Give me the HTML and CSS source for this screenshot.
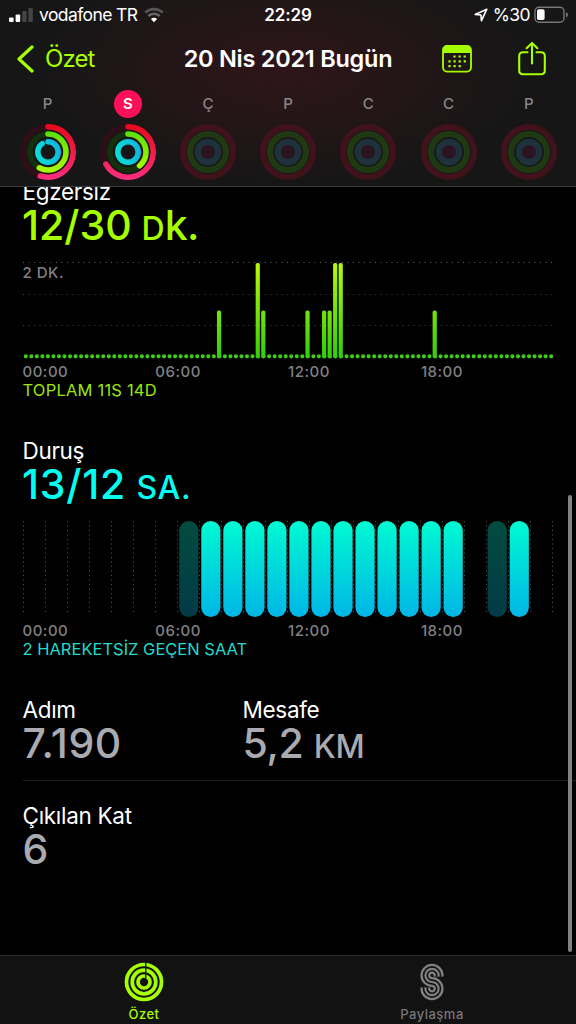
FILE: index.html
```
<!DOCTYPE html>
<html lang="tr">
<head>
    <meta charset="UTF-8">
    <meta name="viewport" content="width=device-width, initial-scale=1.0">
    <title>Özet</title>
    <link rel="stylesheet" href="styles.css">
</head>
<body>
    <header class="header">
        <div class="status-bar">
            <div class="status-left">
                <svg class="signal" width="24" height="16" viewBox="0 0 24 16">
                    <rect x="0" y="10.5" width="4.6" height="4.5" rx="1" fill="#fff"/>
                    <rect x="6.6" y="7.5" width="4.6" height="7.5" rx="1" fill="#fff"/>
                    <rect x="13.2" y="4" width="4.4" height="11" rx="1" fill="#444"/>
                    <rect x="19.4" y="1" width="4.4" height="14" rx="1" fill="#444"/>
                </svg>
                <span class="carrier">vodafone TR</span>
                <svg class="wifi" width="20" height="16" viewBox="0 0 20 16">
                    <path d="M1.3 5.6A12.4 12.4 0 0 1 18.7 5.6" fill="none" stroke="#555" stroke-width="2.7"/>
                    <path d="M4.4 9A8 8 0 0 1 15.6 9" fill="none" stroke="#666" stroke-width="2.5"/>
                    <path d="M10 15.2L6.9 12.1A4.5 4.5 0 0 1 13.1 12.1Z" fill="#fff"/>
                </svg>
            </div>
            <div class="clock">22:29</div>
            <div class="status-right">
                <svg width="14" height="14" viewBox="0 0 14 14">
                    <path d="M12.8 1.2L1.2 6.4L7 7L7.4 12.8Z" fill="none" stroke="#fff" stroke-width="1.6" stroke-linejoin="round"/>
                </svg>
                <span class="percent">%30</span>
                <svg width="35" height="18" viewBox="0 0 35 18">
                    <rect x="1" y="1.2" width="29" height="15" rx="4" fill="none" stroke="#777" stroke-width="1.4"/>
                    <rect x="3" y="3.3" width="7.6" height="10.8" rx="1.8" fill="#fff"/>
                    <path d="M32 6.2Q34 7 34 8.8Q34 10.6 32 11.4Z" fill="#777"/>
                </svg>
            </div>
        </div>

        <nav class="nav-bar">
            <a class="back">
                <svg width="18" height="28" viewBox="0 0 18 28">
                    <path d="M15 2L2 14L15 26" fill="none" stroke="#a6ff00" stroke-width="3.2" stroke-linecap="round" stroke-linejoin="round"/>
                </svg>
                <span>Özet</span>
            </a>
            <h1 class="title">20 Nis 2021 Bugün</h1>
            <div class="actions">
                <svg width="30" height="28" viewBox="0 0 30 28">
                    <rect x="1" y="1" width="28" height="25.6" rx="4" fill="none" stroke="#a6ff00" stroke-width="1.8"/>
                    <path d="M1 8V5Q1 1 5 1H25Q29 1 29 5V8Z" fill="#a6ff00"/>
                    <path d="M11.4 11.5H24.4M6.4 16.4H24.4M6.4 21.2H19" stroke="#a6ff00" stroke-width="2.2" stroke-dasharray="2.2 2.9"/>
                </svg>
                <svg width="28" height="36" viewBox="0 0 28 36">
                    <path d="M9.5 11.3H5Q1.2 11.3 1.2 15V29.5Q1.2 33.2 5 33.2H23Q26.8 33.2 26.8 29.5V15Q26.8 11.3 23 11.3H18.5" fill="none" stroke="#a6ff00" stroke-width="2.1" stroke-linecap="round"/>
                    <path d="M14 22.5V2.2M8.6 7.3L14 2L19.4 7.3" fill="none" stroke="#a6ff00" stroke-width="2.1" stroke-linecap="round" stroke-linejoin="round"/>
                </svg>
            </div>
        </nav>

        <div class="week">
            <div class="day">
                <span class="day-name">P</span>
                <svg class="rings" viewBox="-29 -29 58 58">
                    <defs>
                        <linearGradient id="move" gradientUnits="userSpaceOnUse" x1="28" y1="0" x2="-28" y2="0">
                            <stop offset="0" stop-color="#e60a18"/>
                            <stop offset="1" stop-color="#fa2f80"/>
                        </linearGradient>
                        <linearGradient id="exercise" gradientUnits="userSpaceOnUse" x1="20" y1="0" x2="-20" y2="0">
                            <stop offset="0" stop-color="#5ce008"/>
                            <stop offset="1" stop-color="#acfa04"/>
                        </linearGradient>
                        <linearGradient id="stand" gradientUnits="userSpaceOnUse" x1="4" y1="13" x2="-4" y2="-13">
                            <stop offset="0" stop-color="#10b4dc"/>
                            <stop offset="1" stop-color="#08e0d4"/>
                        </linearGradient>
                    </defs>
                    <g class="track">
                        <circle class="r-move" r="25.2"/>
                        <circle class="r-exercise" r="18"/>
                        <circle class="r-stand" r="10.2"/>
                    </g>
                    <g class="arc" transform="rotate(-90)">
                        <circle r="25.2" stroke="url(#move)" pathLength="360" stroke-dasharray="198 360"/>
                        <circle r="18" stroke="url(#exercise)" pathLength="360" stroke-dasharray="209 360"/>
                        <circle r="10.2" stroke="url(#stand)" pathLength="360" stroke-dasharray="325 360"/>
                    </g>
                </svg>
            </div>
            <div class="day">
                <span class="day-name selected">S</span>
                <svg class="rings" viewBox="-29 -29 58 58">
                    <g class="track">
                        <circle class="r-move" r="25.2"/>
                        <circle class="r-exercise" r="18"/>
                        <circle class="r-stand" r="10.2"/>
                    </g>
                    <g class="arc" transform="rotate(-90)">
                        <circle r="25.2" stroke="url(#move)" pathLength="360" stroke-dasharray="241 360"/>
                        <circle r="18" stroke="url(#exercise)" pathLength="360" stroke-dasharray="140 360"/>
                        <circle r="10.2" stroke="url(#stand)"/>
                    </g>
                </svg>
            </div>
            <div class="day future">
                <span class="day-name">Ç</span>
                <svg class="rings" viewBox="-29 -29 58 58"><circle class="r-move" r="25"/><circle class="r-exercise" r="18"/><circle class="r-stand" r="10.2"/></svg>
            </div>
            <div class="day future">
                <span class="day-name">P</span>
                <svg class="rings" viewBox="-29 -29 58 58"><circle class="r-move" r="25"/><circle class="r-exercise" r="18"/><circle class="r-stand" r="10.2"/></svg>
            </div>
            <div class="day future">
                <span class="day-name">C</span>
                <svg class="rings" viewBox="-29 -29 58 58"><circle class="r-move" r="25"/><circle class="r-exercise" r="18"/><circle class="r-stand" r="10.2"/></svg>
            </div>
            <div class="day future">
                <span class="day-name">C</span>
                <svg class="rings" viewBox="-29 -29 58 58"><circle class="r-move" r="25"/><circle class="r-exercise" r="18"/><circle class="r-stand" r="10.2"/></svg>
            </div>
            <div class="day future">
                <span class="day-name">P</span>
                <svg class="rings" viewBox="-29 -29 58 58"><circle class="r-move" r="25"/><circle class="r-exercise" r="18"/><circle class="r-stand" r="10.2"/></svg>
            </div>
        </div>
    </header>

    <main class="content">
        <section class="metric">
            <h2 class="label">Egzersiz</h2>
            <p class="value exercise">12/30 <span class="unit">D</span><span class="unit-tall">k.</span></p>
            <svg class="chart" width="576" height="106" viewBox="0 256 576 106">
                <defs>
                    <linearGradient id="minutes" gradientUnits="userSpaceOnUse" x1="0" y1="263" x2="0" y2="358">
                        <stop offset="0" stop-color="#b8f80c"/>
                        <stop offset="1" stop-color="#32cc0c"/>
                    </linearGradient>
                </defs>
                <path class="grid-line" d="M23 262.5H553"/>
                <path class="grid-line faint" d="M23 294.5H553M23 325.5H553"/>
                <text class="chart-text" x="22.5" y="277.7">2 DK.</text>
                <path class="dots" d="M25.8 356.3H551.5"/>
                <g id="exerciseBars" fill="url(#minutes)"></g>
            </svg>
            <div class="axis"><span>00:00</span><span>06:00</span><span>12:00</span><span>18:00</span></div>
            <p class="total exercise">TOPLAM 11S 14D</p>
        </section>

        <section class="metric">
            <h2 class="label">Duruş</h2>
            <p class="value stand">13/12 <span class="unit">SA.</span></p>
            <svg class="chart" width="576" height="106" viewBox="0 515 576 106">
                <defs>
                    <linearGradient id="hours" x1="0" y1="0" x2="0" y2="1">
                        <stop offset="0" stop-color="#00fad2"/>
                        <stop offset="1" stop-color="#00b6e6"/>
                    </linearGradient>
                    <linearGradient id="idle" x1="0" y1="0" x2="0" y2="1">
                        <stop offset="0" stop-color="#024c40"/>
                        <stop offset="1" stop-color="#023a46"/>
                    </linearGradient>
                </defs>
                <g id="standBars"></g>
            </svg>
            <div class="axis"><span>00:00</span><span>06:00</span><span>12:00</span><span>18:00</span></div>
            <p class="total idle">2 HAREKETSİZ GEÇEN SAAT</p>
        </section>

        <div class="stats">
            <div class="stat-row">
                <div class="stat">
                    <h2 class="label">Adım</h2>
                    <p class="value steps">7.190</p>
                </div>
                <div class="stat">
                    <h2 class="label">Mesafe</h2>
                    <p class="value distance">5,2 <span class="unit">KM</span></p>
                </div>
            </div>
            <div class="stat-row">
                <div class="stat">
                    <h2 class="label">Çıkılan Kat</h2>
                    <p class="value">6</p>
                </div>
            </div>
        </div>
    </main>

    <div class="scrollbar"></div>

    <footer class="tab-bar">
        <a class="tab active">
            <svg width="40" height="40" viewBox="-20 -20 40 40">
                <g fill="none" stroke="#a6ff00" stroke-width="3.7">
                    <circle r="17.5"/>
                    <circle r="11.8"/>
                    <circle r="6"/>
                </g>
                <path d="M1.8 -20V-15.2M1.8 -14V-9.6M1.8 -8.2V-3.8" stroke="#121212" stroke-width="1.3"/>
            </svg>
            <span>Özet</span>
        </a>
        <a class="tab">
            <svg width="40" height="40" viewBox="-20 -20 40 40">
                <g fill="none">
                    <path d="M6.6 -5.5V-6.5A6.6 6.6 0 1 0 0 0A6.6 6.6 0 1 1 -6.6 6.5V5.5" stroke="#808080" stroke-width="10"/>
                    <path d="M6.6 -5.5V-6.5A6.6 6.6 0 1 0 0 0A6.6 6.6 0 1 1 -6.6 6.5V5.5" stroke="#121212" stroke-width="5.4"/>
                    <path d="M6.6 -5.5V-6.5A6.6 6.6 0 1 0 0 0A6.6 6.6 0 1 1 -6.6 6.5V5.5" stroke="#808080" stroke-width="2.2"/>
                </g>
            </svg>
            <span>Paylaşma</span>
        </a>
    </footer>
    <script src="script.js"></script>
</body>
</html>
```
FILE: styles.css
```
* {
    box-sizing: border-box;
}
body {
    position: relative;
    display: flex;
    flex-direction: column;
    width: 576px;
    height: 1024px;
    margin: 0;
    overflow: hidden;
    background: #000;
    color: #fff;
    font-family: Inter, "Liberation Sans", sans-serif;
}
h1, h2, p {
    margin: 0;
    font-weight: 400;
}
svg {
    display: block;
    flex: none;
}

/* header */
.header {
    flex: none;
    height: 187px;
    background:
        radial-gradient(ellipse 250px 115px at 285px 70px, rgba(72, 20, 28, 0.5), rgba(72, 20, 28, 0)),
        #161616;
    border-bottom: 1px solid #3a3a3a;
}
.status-bar {
    display: grid;
    grid-template-columns: 1fr auto 1fr;
    align-items: center;
    height: 29px;
    padding: 0 7px 0 9px;
    font-size: 17.5px;
}
.status-left,
.status-right {
    display: flex;
    align-items: center;
}
.status-right {
    justify-content: flex-end;
}
.signal {
    margin-right: 6px;
}
.wifi {
    margin-left: 6px;
}
.carrier {
    width: 99px;
    letter-spacing: -0.6px;
    white-space: nowrap;
}
.clock {
    font-size: 17px;
    font-weight: 600;
    letter-spacing: -0.1px;
    margin-right: 2px;
}
.percent {
    margin: 0 4px 0 5px;
    letter-spacing: -0.6px;
}
.nav-bar {
    display: grid;
    grid-template-columns: 1fr auto 1fr;
    align-items: center;
    height: 59px;
    padding: 0 30px;
}
.back {
    display: flex;
    align-items: center;
    gap: 10px;
    margin-left: -13px;
    color: #a6ff00;
    font-size: 24px;
    letter-spacing: -0.9px;
}
.title {
    font-size: 23.5px;
    font-weight: 600;
    letter-spacing: -0.25px;
}
.actions {
    display: flex;
    align-items: center;
    justify-content: flex-end;
    gap: 46px;
}
.week {
    display: flex;
    padding-left: 7.5px;
}
.day {
    display: flex;
    flex-direction: column;
    align-items: center;
    width: 80.2px;
    padding-top: 2px;
}
.day-name {
    width: 28px;
    height: 28px;
    border-radius: 50%;
    color: #8a8486;
    font-size: 15px;
    font-weight: 500;
    line-height: 28px;
    text-align: center;
}
.day-name.selected {
    background: #ff1058;
    color: #fff;
    font-weight: 600;
}
.rings {
    width: 58px;
    height: 58px;
    margin-top: 4.5px;
    fill: none;
    stroke-width: 5.5;
}
.track .r-move { stroke: #2e0f16; }
.track .r-exercise { stroke: #15300f; }
.track .r-stand { stroke: #0b2c33; }
.arc circle {
    stroke-linecap: round;
}
.future .rings {
    stroke-width: 6.2;
}
.future .r-move { stroke: #40121b; }
.future .r-exercise { stroke: #1f3a12; }
.future .r-stand { stroke: #1d323b; fill: #2a1422; }

/* activity sections */
.content {
    flex: 1;
    overflow: hidden;
}
.metric {
    height: 259px;
}
.metric:first-child {
    margin-top: -9px;
}
.label {
    padding-left: 22.5px;
    font-size: 22.5px;
    line-height: 27px;
    height: 26px;
    letter-spacing: -0.3px;
}
.value {
    padding-left: 22px;
    height: 42px;
    font-size: 41px;
    font-weight: 450;
    line-height: 42px;
    color: #a9abb0;
    white-space: nowrap;
}
.unit {
    font-size: 32px;
    font-weight: 500;
}
.value.exercise {
    word-spacing: -1px;
}
.unit-tall {
    letter-spacing: -0.5px;
}
.value.stand {
    letter-spacing: 0.8px;
    word-spacing: -1.5px;
}
.value.stand .unit {
    letter-spacing: 0.7px;
}
.value.steps {
    letter-spacing: 0.6px;
}
.value.distance,
.value.distance .unit {
    letter-spacing: -0.4px;
}
.exercise { color: #a6ff00; }
.stand { color: #00fff0; }
.idle { color: #20dccb; }
.chart {
    margin-top: 10px;
}
.grid-line {
    stroke: #5a5a5a;
    stroke-dasharray: 1 4.5;
}
.grid-line.faint {
    stroke: #444;
}
.chart-text,
.axis {
    fill: #808083;
    color: #808083;
    font-size: 15px;
    font-weight: 500;
    letter-spacing: 0.5px;
}
.dots {
    stroke: #3fcb16;
    stroke-width: 4.2;
    stroke-linecap: round;
    stroke-dasharray: 0 5.53;
}
.axis {
    display: grid;
    grid-template-columns: repeat(4, 132.8px);
    height: 18px;
    padding-left: 22.5px;
    line-height: 19px;
}
.total {
    padding-left: 22.5px;
    font-size: 16.5px;
    line-height: 20px;
}
.total.exercise {
    color: #9be60e;
    letter-spacing: 0.2px;
}

/* stats */
.stat-row {
    display: flex;
    height: 84px;
    margin-left: 22.5px;
}
.stat-row + .stat-row {
    height: 90px;
    padding-top: 21px;
    border-top: 1px solid #202020;
}
.stat {
    width: 220px;
}
.stat .label {
    padding-left: 0;
}
.stat .value {
    padding-left: 0;
}

.scrollbar {
    position: absolute;
    top: 495px;
    right: 4px;
    width: 4px;
    height: 457px;
    border-radius: 2px;
    background: #828282;
}

/* tab bar */
.tab-bar {
    display: flex;
    flex: none;
    height: 69px;
    background: #121212;
    border-top: 1px solid #282828;
}
.tab {
    display: flex;
    flex-direction: column;
    align-items: center;
    width: 288px;
    padding-top: 6px;
    color: #777;
    font-size: 13px;
    font-weight: 500;
    line-height: 16px;
    letter-spacing: 0.5px;
}
.tab span {
    margin-top: 4px;
}
.tab.active {
    color: #a6ff00;
}
```
FILE: script.js
```
const SVG = 'http://www.w3.org/2000/svg';

function add(parent, tag, attrs) {
    const el = document.createElementNS(SVG, tag);
    for (const key in attrs) {
        el.setAttribute(key, attrs[key]);
    }
    parent.appendChild(el);
}

// exercise minutes per quarter hour
const minutes = { 35: 1, 42: 2, 43: 1, 51: 1, 54: 1, 55: 1, 56: 2, 57: 2, 74: 1 };
const exerciseBars = document.getElementById('exerciseBars');
for (const slot in minutes) {
    const top = minutes[slot] === 2 ? 263 : 310.5;
    add(exerciseBars, 'rect', { x: 23.4 + slot * 5.53, y: top, width: 4.2, height: 358.3 - top, rx: 1.8 });
}

// stand hours: s = stood, i = idle, - = no data
const hours = '-------issssssssssss-is-';
const standBars = document.getElementById('standBars');
for (let i = 0; i <= 24; i++) {
    const x = Math.round(23 + i * 22.03) + 0.5;
    add(standBars, 'path', { d: 'M' + x + ' 521V615', stroke: '#555', 'stroke-dasharray': '1 3.5' });
}
[...hours].forEach((state, i) => {
    if (state === '-') return;
    add(standBars, 'rect', {
        x: 25 + i * 22.03, y: 521, width: 19.2, height: 96, rx: 9.6,
        fill: state === 's' ? 'url(#hours)' : 'url(#idle)'
    });
});
```
